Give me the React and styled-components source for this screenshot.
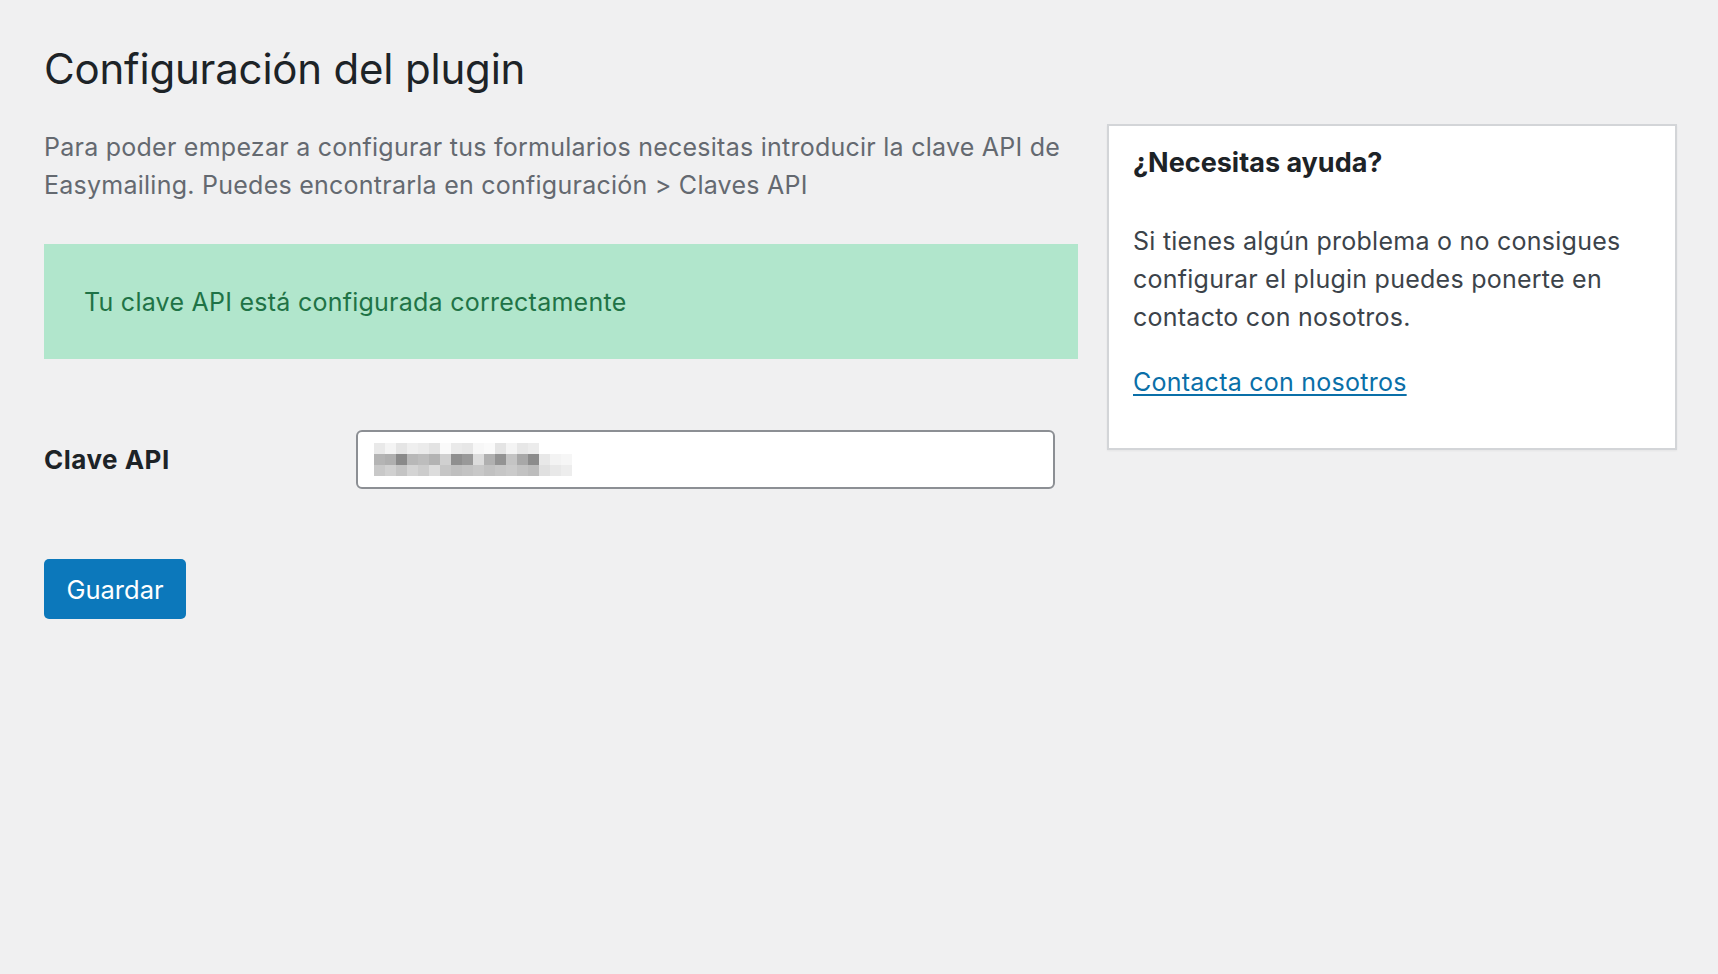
import React from "react";
import styled, { createGlobalStyle } from "styled-components";

const GlobalStyle = createGlobalStyle`
  html, body {
    margin: 0;
    padding: 0;
    background: #f0f0f1;
  }
  body {
    font-family: Inter, "Noto Sans", "Liberation Sans", sans-serif;
    -webkit-font-smoothing: antialiased;
  }
`;

const Page = styled.div`
  min-height: 974px;
  box-sizing: border-box;
  padding: 45px 41px 0 44px;
`;

const Title = styled.h1`
  margin: 0 0 31px 0;
  font-size: 42px;
  line-height: 48px;
  font-weight: 400;
  color: #1d2327;
  letter-spacing: -0.2px;
`;

const Columns = styled.div`
  display: flex;
  align-items: flex-start;
  gap: 29px;
`;

const Main = styled.div`
  flex: 1;
  display: flex;
  flex-direction: column;
  align-items: flex-start;
`;

const Intro = styled.p`
  margin: 5px 0 40px 0;
  font-size: 25px;
  line-height: 37.5px;
  letter-spacing: 0.25px;
  color: #646970;
`;

const Notice = styled.div`
  align-self: stretch;
  box-sizing: border-box;
  height: 115px;
  display: flex;
  align-items: center;
  padding: 0 40px;
  background: #b1e6cc;
  color: #1f7346;
  font-size: 25px;
  letter-spacing: 0.25px;
`;

const FormRow = styled.div`
  align-self: stretch;
  display: grid;
  grid-template-columns: 312px 699px;
  align-items: center;
  margin-top: 71px;
`;

const Label = styled.label`
  font-size: 26px;
  font-weight: 700;
  letter-spacing: 0.5px;
  color: #1d2327;
`;

const KeyField = styled.div`
  box-sizing: border-box;
  height: 59px;
  display: flex;
  align-items: center;
  padding: 0 16px;
  background: #fff;
  border: 2px solid #8c8f94;
  border-radius: 6px;
`;

const SaveButton = styled.button`
  margin-top: 70px;
  width: 142px;
  height: 60px;
  border: none;
  border-radius: 5px;
  background: #0c78bb;
  color: #fff;
  font-family: inherit;
  font-size: 25.5px;
  cursor: pointer;
`;

const HelpCard = styled.aside`
  width: 570px;
  box-sizing: border-box;
  padding: 19px 24px 47px 24px;
  background: #fff;
  border: 2px solid #d3d5d8;
  box-shadow: 0 1px 2px rgba(0, 0, 0, 0.05);
`;

const CardTitle = styled.h2`
  margin: 0 0 43px 0;
  font-size: 27px;
  line-height: 35px;
  font-weight: 700;
  color: #1d2327;
`;

const CardText = styled.p`
  margin: 0 0 28px 0;
  font-size: 25px;
  line-height: 37.8px;
  letter-spacing: 0.25px;
  color: #3c434a;
`;

const ContactLink = styled.a`
  font-size: 25px;
  line-height: 37px;
  letter-spacing: 0.25px;
  color: #0a6fa8;
  text-decoration: underline;
  text-underline-offset: 3px;
`;

// pixelated (blurred) API key, one row per band of blocks
const maskRows = [
  ["#e9e9e9", "#f4f4f4", "#e5e5e5", "#efefef", "#ebebeb", "#e3e3e3", "#fafafa", "#eaeaea", "#e7e7e7", "#f7f7f7", "#fafafa", "#e4e4e4", "#f4f4f4", "#e7e7e7", "#ececec", "#fff", "#fff", "#fff"],
  ["#b4b4b4", "#afafaf", "#8a8a8a", "#b8b8b8", "#bdbdbd", "#b3b3b3", "#d0d0d0", "#8f8f8f", "#999999", "#dcdcdc", "#b0b0b0", "#939393", "#c4c4c4", "#a8a8a8", "#8c8c8c", "#e8e8e8", "#f3f3f3", "#f6f6f6"],
  ["#c8c8c8", "#d0d0d0", "#c4c4c4", "#d4d4d4", "#cccccc", "#dcdcdc", "#c6c6c6", "#bfbfbf", "#c3c3c3", "#c8c8c8", "#c1c1c1", "#c6c6c6", "#cacaca", "#c2c2c2", "#bcbcbc", "#e0e0e0", "#e8e8e8", "#ededed"],
];

function MaskedKey() {
  return (
    <svg width="198" height="33" viewBox="0 0 198 33">
      {maskRows.map((row, r) =>
        row.map((c, i) => (
          <rect key={r + "-" + i} x={i * 11} y={r * 11} width="11.2" height="11.2" fill={c} />
        ))
      )}
    </svg>
  );
}

export default function App() {
  return (
    <Page>
      <GlobalStyle />
      <Title>Configuración del plugin</Title>
      <Columns>
        <Main>
          <Intro>
            Para poder empezar a configurar tus formularios necesitas introducir la clave API de
            Easymailing. Puedes encontrarla en configuración &gt; Claves API
          </Intro>
          <Notice>Tu clave API está configurada correctamente</Notice>
          <FormRow>
            <Label>Clave API</Label>
            <KeyField>
              <MaskedKey />
            </KeyField>
          </FormRow>
          <SaveButton>Guardar</SaveButton>
        </Main>
        <HelpCard>
          <CardTitle>¿Necesitas ayuda?</CardTitle>
          <CardText>
            Si tienes algún problema o no consigues configurar el plugin puedes ponerte en
            contacto con nosotros.
          </CardText>
          <ContactLink href="#">Contacta con nosotros</ContactLink>
        </HelpCard>
      </Columns>
    </Page>
  );
}
